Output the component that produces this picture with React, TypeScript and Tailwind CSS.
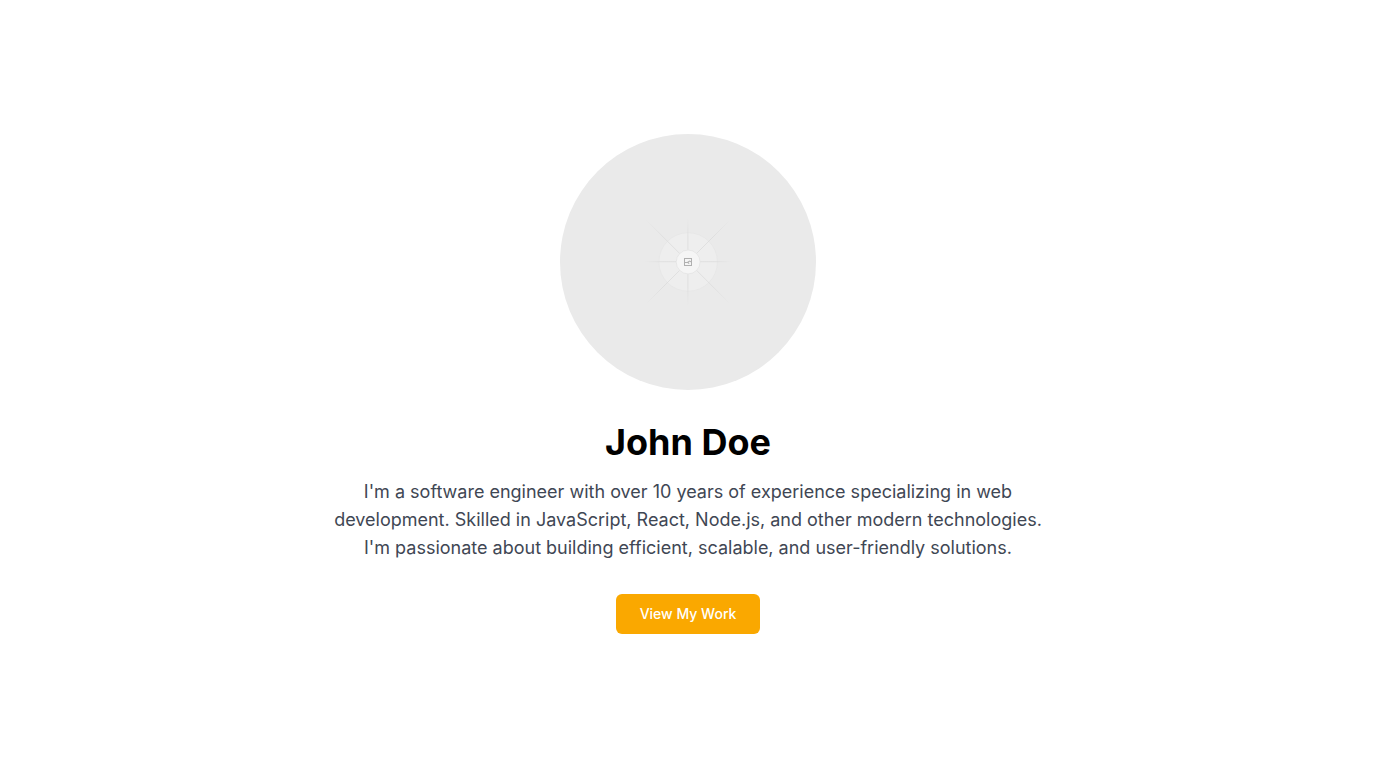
const fades = [
  { id: 'fade-down', x1: 400, y1: 399, x2: 801, y2: 800 },
  { id: 'fade-up', x1: 400, y1: 800, x2: 801, y2: 399 },
  { id: 'fade-across', x1: 390, y1: 0, x2: 810, y2: 0 },
  { id: 'fade-vertical', x1: 0, y1: 390, x2: 0, y2: 810 },
];

function PortraitPlaceholder() {
  return (
    <svg viewBox="0 0 1200 1200" fill="none" role="img" aria-label="Portrait of John Doe" className="size-64 rounded-full">
      <defs>
        {fades.map((fade) => (
          <linearGradient key={fade.id} {...fade} gradientUnits="userSpaceOnUse">
            <stop stopColor="#C9C9C9" stopOpacity="0" />
            <stop offset=".208" stopColor="#C9C9C9" />
            <stop offset=".792" stopColor="#C9C9C9" />
            <stop offset="1" stopColor="#C9C9C9" stopOpacity="0" />
          </linearGradient>
        ))}
      </defs>
      <rect width="1200" height="1200" fill="#EAEAEA" />
      <g opacity=".5">
        <g opacity=".5">
          <circle cx="600.709" cy="599.88" r="138" fill="#FAFAFA" />
          <circle cx="600.709" cy="599.88" r="137" stroke="#C9C9C9" strokeWidth="2.418" />
        </g>
        <g strokeWidth="3.4">
          <path stroke="url(#fade-down)" d="M400 399l401 401" />
          <path stroke="url(#fade-up)" d="M400 800l401-401" />
          <path stroke="url(#fade-across)" d="M390 598.671h420" />
          <path stroke="url(#fade-vertical)" d="M599.5 810V390" />
        </g>
        <circle cx="600.709" cy="599.88" r="57" fill="#fff" />
        <g stroke="#777" strokeWidth="4.7">
          <rect x="583.6" y="583.6" width="32.8" height="32.8" />
          <path d="M583.6 602.3h14l9.4-7 9.4 4.7M599.5 602.3l6 5" />
        </g>
        <circle cx="600.709" cy="599.88" r="56" stroke="#C9C9C9" strokeWidth="2.418" />
      </g>
    </svg>
  );
}

export default function App() {
  return (
    <main className="flex min-h-screen flex-col items-center justify-center bg-white px-4 font-['Inter',sans-serif]">
      <PortraitPlaceholder />
      <h1 className="mt-8 text-4xl font-bold text-black">John Doe</h1>
      <p className="mt-4 max-w-3xl px-4 text-center text-lg text-[#3f4754]">
        I'm a software engineer with over 10 years of experience specializing in web development. Skilled in
        JavaScript, React, Node.js, and other modern technologies. I'm passionate about building efficient,
        scalable, and user-friendly solutions.
      </p>
      <a
        href="#work"
        className="mt-8 inline-flex h-10 items-center justify-center rounded-md bg-[#faa800] px-6 text-sm font-medium text-white"
      >
        View My Work
      </a>
    </main>
  );
}
